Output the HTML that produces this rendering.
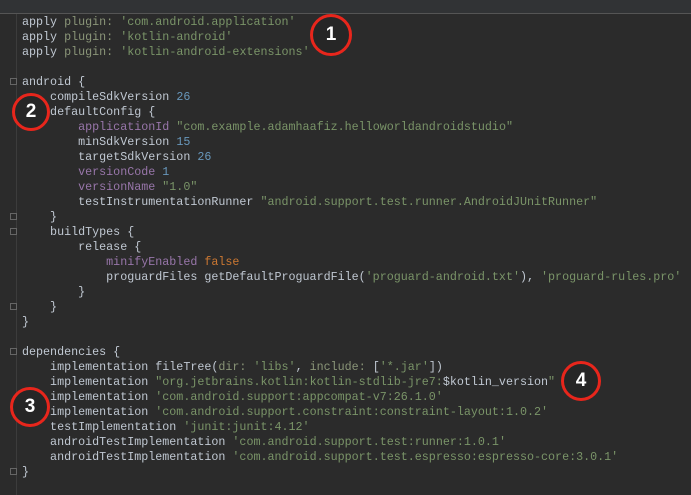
<!DOCTYPE html><html><head><style>
body{margin:0;width:691px;height:495px;background:#2b2b2b;overflow:hidden;position:relative;font-family:"Liberation Mono",monospace}
.top{position:absolute;left:0;top:0;width:691px;height:13px;background:#313335;border-bottom:1px solid #555}
.gut{position:absolute;left:16px;top:14px;width:1px;height:481px;background:#3c3c3c}
pre{position:absolute;left:22px;top:14.5px;margin:0;font-size:11.7px;line-height:15px;color:#c0c8d2;font-family:"Liberation Mono",monospace}
.s{color:#7a9468}.n{color:#6897bb}.k{color:#cc7832}.p{color:#9876aa}.l{color:#8a9578}
.c{position:absolute;border:3.5px solid #e8261c;border-radius:50%;background:#262626;color:#fff;font:bold 19px "Liberation Sans",sans-serif;display:flex;align-items:center;justify-content:center;box-sizing:border-box}
.f{position:absolute;left:10px;width:7px;height:7px;border:1px solid #666;box-sizing:border-box;background:#2b2b2b}
</style></head><body>
<div class="top"></div><div class="gut"></div>
<div class="f" style="top:78px"></div><div class="f" style="top:348px"></div><div class="f" style="top:468px"></div>
<div class="f" style="top:213px;left:10px"></div><div class="f" style="top:228px"></div><div class="f" style="top:303px"></div>
<pre>apply <span class="l">plugin:</span> <span class="s">'com.android.application'</span>
apply <span class="l">plugin:</span> <span class="s">'kotlin-android'</span>
apply <span class="l">plugin:</span> <span class="s">'kotlin-android-extensions'</span>

android {
    compileSdkVersion <span class="n">26</span>
    defaultConfig {
        <span class="p">applicationId</span> <span class="s">"com.example.adamhaafiz.helloworldandroidstudio"</span>
        minSdkVersion <span class="n">15</span>
        targetSdkVersion <span class="n">26</span>
        <span class="p">versionCode</span> <span class="n">1</span>
        <span class="p">versionName</span> <span class="s">"1.0"</span>
        testInstrumentationRunner <span class="s">"android.support.test.runner.AndroidJUnitRunner"</span>
    }
    buildTypes {
        release {
            <span class="p">minifyEnabled</span> <span class="k">false</span>
            proguardFiles getDefaultProguardFile(<span class="s">'proguard-android.txt'</span>), <span class="s">'proguard-rules.pro'</span>
        }
    }
}

dependencies {
    implementation fileTree(<span class="l">dir:</span> <span class="s">'libs'</span>, <span class="l">include:</span> [<span class="s">'*.jar'</span>])
    implementation <span class="s">"org.jetbrains.kotlin:kotlin-stdlib-jre7:</span>$kotlin_version<span class="s">"</span>
    implementation <span class="s">'com.android.support:appcompat-v7:26.1.0'</span>
    implementation <span class="s">'com.android.support.constraint:constraint-layout:1.0.2'</span>
    testImplementation <span class="s">'junit:junit:4.12'</span>
    androidTestImplementation <span class="s">'com.android.support.test:runner:1.0.1'</span>
    androidTestImplementation <span class="s">'com.android.support.test.espresso:espresso-core:3.0.1'</span>
}</pre>
<div class="c" style="left:310px;top:14px;width:42px;height:42px">1</div>
<div class="c" style="left:12px;top:93px;width:38px;height:38px">2</div>
<div class="c" style="left:10px;top:387px;width:40px;height:40px">3</div>
<div class="c" style="left:561px;top:361px;width:40px;height:40px">4</div>
</body></html>
